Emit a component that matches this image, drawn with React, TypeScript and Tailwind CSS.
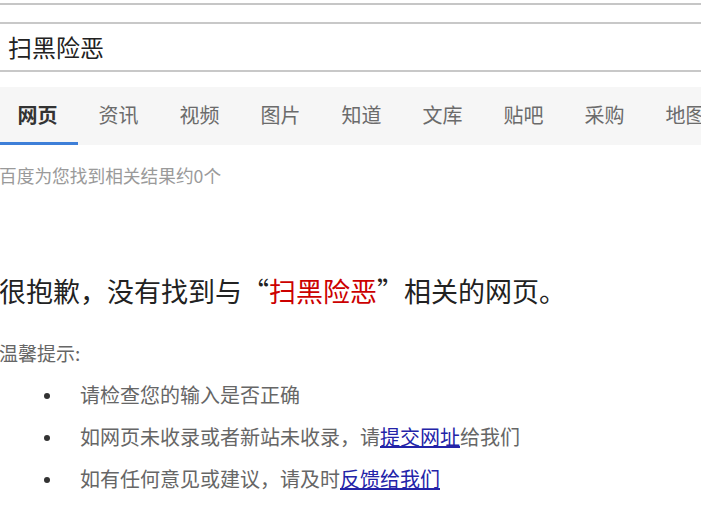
import React from "react";

const tabs = ["网页", "资讯", "视频", "图片", "知道", "文库", "贴吧", "采购", "地图"];

export default function App() {
  return (
    <div
      className="w-[701px] h-[526px] overflow-hidden bg-white"
      style={{ fontFamily: '"Noto Sans CJK SC", "Noto Sans", sans-serif' }}
    >
      <div className="pt-[3px]">
        <div className="h-[2px] bg-[#c6c6c6]" />
      </div>
      <div className="mt-[17px] border-y-2 border-[#c8c8c8] h-[50px] flex items-center pl-[8px]">
        <span className="text-[24px] text-[#222] leading-none">扫黑险恶</span>
      </div>
      <div className="mt-[15px] h-[58px] bg-[#f6f6f6] overflow-hidden">
        <div className="flex h-full -ml-[3px]">
          {tabs.map((t, i) => (
            <div
              key={t}
              className={
                "w-[81px] shrink-0 h-full flex items-center justify-center text-[20px] relative " +
                (i === 0 ? "font-bold text-[#333]" : "text-[#6b6b6b]")
              }
            >
              <span className="-mt-[2px]">{t}</span>
              {i === 0 && (
                <div className="absolute left-0 right-0 bottom-0 h-[3px] bg-[#3e7fd8]" />
              )}
            </div>
          ))}
        </div>
      </div>
      <div className="mt-[18px] text-[17.7px] leading-[24px] text-[#9a9a9a] -ml-[1px]">
        百度为您找到相关结果约0个
      </div>
      <div className="mt-[87px] text-[27px] leading-[34px] text-[#222] -ml-[1px]">
        很抱歉，没有找到与“<span className="text-[#c00]">扫黑险恶</span>”相关的网页。
      </div>
      <div className="mt-[33px] text-[19px] leading-[24px] text-[#666] -ml-[1px]">温馨提示:</div>
      <ul
        className="mt-[10px] text-[20px] text-[#666] leading-[42px]"
        style={{ fontFamily: '"Liberation Serif", "Noto Sans CJK SC", serif' }}
      >
        {[
          <>请检查您的输入是否正确</>,
          <>
            如网页未收录或者新站未收录，请
            <a className="text-[#2323a8] underline">提交网址</a>给我们
          </>,
          <>
            如有任何意见或建议，请及时<a className="text-[#2323a8] underline">反馈给我们</a>
          </>,
        ].map((c, i) => (
          <li key={i} className="flex items-center">
            <span className="w-[80px] flex justify-end pr-[30px]">
              <span className="w-[6px] h-[6px] rounded-full bg-[#333]" />
            </span>
            <span>{c}</span>
          </li>
        ))}
      </ul>
    </div>
  );
}
